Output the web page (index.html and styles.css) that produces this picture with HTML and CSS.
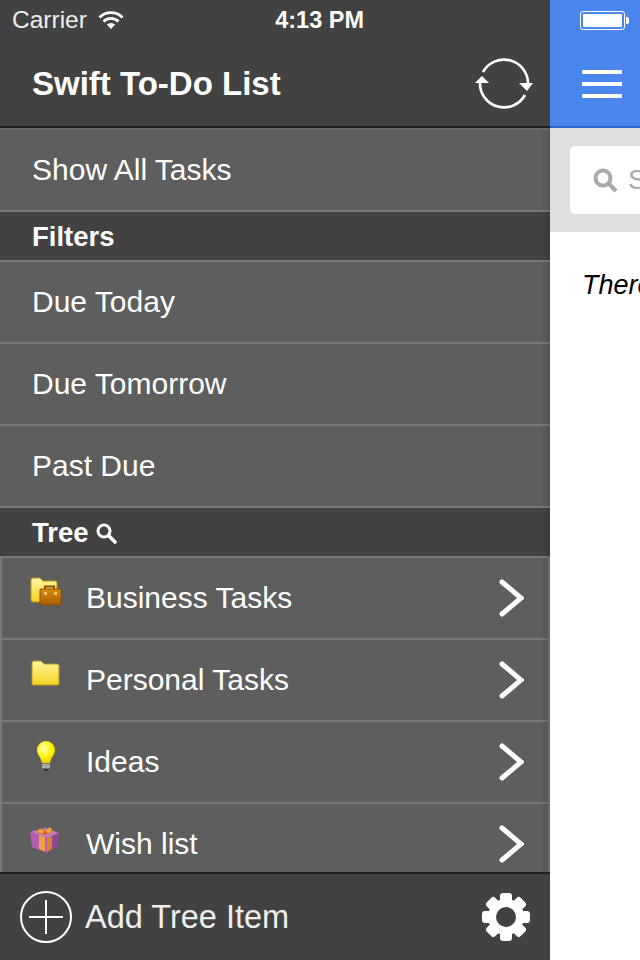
FILE: index.html
```html
<!DOCTYPE html>
<html lang="en">
<head>
  <meta charset="UTF-8" />
  <meta name="viewport" content="width=device-width, initial-scale=1" />
  <title>Swift To-Do List</title>
  <link rel="stylesheet" href="styles.css">
</head>
<body>

<div class="app">
  <aside class="sidebar">
    <header class="side-header">
      <div class="status-bar">
        <span class="carrier">Carrier
          <svg class="wifi" width="26" height="20" viewBox="0 0 26 20">
            <path d="M1.500 7.500a16 16 0 0 1 23 0" fill="none" stroke="#fff" stroke-width="2.800"/>
            <path d="M5.500 11.500a10.500 10.500 0 0 1 15 0" fill="none" stroke="#fff" stroke-width="2.800"/>
            <path d="M8.800 14.600a6 6 0 0 1 8.400 0L13 19z" fill="#fff"/>
          </svg>
        </span>
        <span class="time">4:13 PM</span>
      </div>
      <div class="title-bar">
        <h1>Swift To-Do List</h1>
        <svg class="sync" width="60" height="52" viewBox="0 0 60 52">
          <path d="M9 15A24 24 0 0 1 54 26" fill="none" stroke="#fff" stroke-width="2.600"/>
          <path d="M51 38A24 24 0 0 1 6 26" fill="none" stroke="#fff" stroke-width="2.600"/>
          <path d="M1 26L8 19L15 26z" fill="#fff"/>
          <path d="M45 26L59 26L53 34z" fill="#fff"/>
        </svg>
      </div>
    </header>

    <nav class="side-list">
      <a class="row">Show All Tasks</a>
      <h2 class="section">Filters</h2>
      <a class="row">Due Today</a>
      <a class="row">Due Tomorrow</a>
      <a class="row">Past Due</a>
      <h2 class="section">Tree
        <svg class="tree-search" width="22" height="22" viewBox="0 0 22 22">
          <circle cx="9" cy="9" r="6" fill="none" stroke="#fff" stroke-width="3"/>
          <path d="M13.500 13.500L20 20" stroke="#fff" stroke-width="3.600" stroke-linecap="round"/>
        </svg>
      </h2>

      <a class="row tree-row">
        <svg class="tree-icon" width="34" height="34" viewBox="0 0 34 34">
          <defs>
            <linearGradient id="folder" x1="0" y1="0" x2="0" y2="1">
              <stop offset="0" stop-color="#fff7a0"/>
              <stop offset="1" stop-color="#f5d21f"/>
            </linearGradient>
            <linearGradient id="brief" x1="0" y1="0" x2="0" y2="1">
              <stop offset="0" stop-color="#d98c0c"/>
              <stop offset="1" stop-color="#a85c04"/>
            </linearGradient>
          </defs>
          <path d="M1 4a2 2 0 0 1 2-2h7l3 3h12a2 2 0 0 1 2 2v19H3a2 2 0 0 1-2-2z" fill="url(#folder)" stroke="#b8951c"/>
          <path d="M15 13v-2.500h9V13" fill="none" stroke="#8a4c05" stroke-width="2"/>
          <rect x="10" y="13" width="21" height="16" rx="1" fill="url(#brief)" stroke="#8a4c05"/>
          <rect x="14" y="16" width="3" height="3" fill="#f4c860"/>
          <rect x="24" y="16" width="3" height="3" fill="#f4c860"/>
        </svg>
        <span>Business Tasks</span>
        <svg class="chevron" width="26" height="38" viewBox="0 0 26 38"><path d="M4 3L23 19L4 35" fill="none" stroke="#fff" stroke-width="5" stroke-linecap="round"/></svg>
      </a>
      <a class="row tree-row">
        <svg class="tree-icon" width="34" height="34" viewBox="0 0 34 34">
          <path d="M2 5a2 2 0 0 1 2-2h7l3 3h13a2 2 0 0 1 2 2v18a1 1 0 0 1-1 1H3a1 1 0 0 1-1-1z" fill="url(#folder)" stroke="#b8951c"/>
        </svg>
        <span>Personal Tasks</span>
        <svg class="chevron" width="26" height="38" viewBox="0 0 26 38"><path d="M4 3L23 19L4 35" fill="none" stroke="#fff" stroke-width="5" stroke-linecap="round"/></svg>
      </a>
      <a class="row tree-row">
        <svg class="tree-icon" width="34" height="34" viewBox="0 0 34 34">
          <defs>
            <radialGradient id="bulb" cx="0.4" cy="0.35" r="0.7">
              <stop offset="0" stop-color="#ffffb0"/>
              <stop offset="0.6" stop-color="#fff200"/>
              <stop offset="1" stop-color="#e3c900"/>
            </radialGradient>
          </defs>
          <path d="M16 1a9 9 0 0 0-9 9c0 5 4 7 5 13h8c1-6 5-8 5-13a9 9 0 0 0-9-9z" fill="url(#bulb)"/>
          <rect x="12" y="23" width="8" height="6" rx="1" fill="#777"/>
          <path d="M12 25h8M12 27h8" stroke="#ddd" stroke-width="1"/>
          <rect x="14" y="29" width="4" height="2" fill="#333"/>
        </svg>
        <span>Ideas</span>
        <svg class="chevron" width="26" height="38" viewBox="0 0 26 38"><path d="M4 3L23 19L4 35" fill="none" stroke="#fff" stroke-width="5" stroke-linecap="round"/></svg>
      </a>
      <a class="row tree-row">
        <svg class="tree-icon" width="34" height="34" viewBox="0 0 34 34">
          <path d="M0 10L15 6L29 11L17 16z" fill="#c77fc0"/>
          <path d="M0 10L17 16V31L2 25z" fill="#b45fb0"/>
          <path d="M17 16L29 11L28 24L17 31z" fill="#8c4a92"/>
          <path d="M9 13L15 15V29.500L9 27z" fill="#f0a040"/>
          <path d="M17 16l5-2v13l-5 3z" fill="#d9822b"/>
          <path d="M15 10c-5-6-9-2-6 1 2 1 4 1 6-1zM15 10c3-7 9-4 6 0-2 2-4 2-6 0z" fill="#f2a83c" stroke="#c97b1c"/>
          <circle cx="15" cy="11" r="2" fill="#d9622b"/>
        </svg>
        <span>Wish list</span>
        <svg class="chevron" width="26" height="38" viewBox="0 0 26 38"><path d="M4 3L23 19L4 35" fill="none" stroke="#fff" stroke-width="5" stroke-linecap="round"/></svg>
      </a>
    </nav>

    <footer class="side-footer">
      <svg class="add-icon" width="54" height="54" viewBox="0 0 54 54">
        <circle cx="27" cy="27" r="25" fill="none" stroke="#fff" stroke-width="2"/>
        <path d="M27 10V44M10 27H44" stroke="#fff" stroke-width="2"/>
      </svg>
      <span class="add-label">Add Tree Item</span>
      <svg class="gear" width="48" height="48" viewBox="0 0 48 48">
        <g fill="#fff">
          <circle cx="24" cy="24" r="18"/>
          <rect x="18" y="0" width="12" height="48" rx="3"/>
          <rect x="18" y="0" width="12" height="48" rx="3" transform="rotate(45 24 24)"/>
          <rect x="18" y="0" width="12" height="48" rx="3" transform="rotate(90 24 24)"/>
          <rect x="18" y="0" width="12" height="48" rx="3" transform="rotate(135 24 24)"/>
        </g>
        <circle cx="24" cy="24" r="10" fill="#424242"/>
      </svg>
    </footer>
  </aside>

  <main class="content">
    <div class="blue-bar">
      <div class="battery-line">
        <span class="battery"><span class="battery-fill"></span></span><span class="battery-tip"></span>
      </div>
      <div class="menu-line">
        <span class="burger"></span>
        <span class="burger"></span>
        <span class="burger"></span>
      </div>
    </div>
    <div class="search-area">
      <div class="search-box">
        <svg width="26" height="26" viewBox="0 0 26 26">
          <circle cx="11" cy="11" r="7.500" fill="none" stroke="#aaa" stroke-width="4"/>
          <path d="M17 17L24 24" stroke="#aaa" stroke-width="4.500"/>
        </svg>
        <span class="placeholder">Search</span>
      </div>
    </div>
    <p class="empty">There are no tasks</p>
  </main>
</div>

</body>
</html>
```

FILE: styles.css
```css
* { margin: 0; padding: 0; box-sizing: border-box; }

html, body {
  height: 960px;
  overflow: hidden;
}

body {
  font-family: "Liberation Sans", Arial, sans-serif;
  background: #fff;
  color: #fff;
}

.app {
  display: flex;
  width: 640px;
  height: 960px;
  overflow: hidden;
}

.sidebar {
  position: relative;
  flex: 0 0 550px;
  display: flex;
  flex-direction: column;
  height: 960px;
  background: #424242;
}

/* soft shadow along the right side of the menu */
.sidebar::after {
  content: "";
  position: absolute;
  top: 128px;
  right: 0;
  bottom: 88px;
  width: 8px;
  background: linear-gradient(to right, rgba(0, 0, 0, 0), rgba(0, 0, 0, 0.12));
}

.side-header {
  flex: 0 0 128px;
  border-bottom: 2px solid #1e1e1e;
}

.status-bar {
  display: flex;
  justify-content: space-between;
  align-items: center;
  height: 40px;
  padding: 0 186px 0 12px;
  font-size: 24px;
}

.carrier {
  display: flex;
  align-items: center;
  gap: 11px;
  font-size: 24.500px;
  color: #eee;
}

.time { font-weight: bold; font-size: 23.500px; }

.title-bar {
  display: flex;
  justify-content: space-between;
  align-items: center;
  height: 86px;
  padding: 0 16px 0 32px;
}

.title-bar h1 {
  font-size: 33px;
  font-weight: bold;
  padding-top: 2px;
}

.side-list {
  flex: 1;
  overflow: hidden;
  border-top: 2px solid #6a6a6a;
}

.row {
  display: flex;
  align-items: center;
  height: 82px;
  padding: 0 32px;
  background: #5e5e5e;
  border-bottom: 2px solid #797979;
  font-size: 30px;
}

.section {
  display: flex;
  align-items: center;
  gap: 6px;
  height: 50px;
  padding-left: 32px;
  padding-top: 1px;
  background: #424242;
  border-bottom: 2px solid #797979;
  font-size: 27.500px;
  font-weight: bold;
}

.tree-row {
  padding: 0 24px 0 28px;
  border-left: 2px solid #797979;
  border-right: 2px solid #797979;
}

.tree-row span { flex: 1; }

.tree-icon {
  flex: 0 0 34px;
  margin-right: 22px;
  align-self: flex-start;
  margin-top: 18px;
}

.side-footer {
  flex: 0 0 88px;
  display: flex;
  align-items: center;
  padding: 0 20px 0 19px;
  background: #424242;
  border-top: 2px solid #1e1e1e;
}

.add-label {
  flex: 1;
  margin-left: 12px;
  font-size: 32.500px;
  color: #eee;
}

.content {
  flex: 0 0 90px;
  width: 90px;
  overflow: hidden;
  color: #000;
}

.blue-bar {
  height: 128px;
  background: #4a86ee;
  border-bottom: 2px solid #2d66c8;
}

.battery-line {
  display: flex;
  align-items: center;
  height: 40px;
  padding-left: 30px;
}

.battery {
  display: block;
  width: 45px;
  height: 19px;
  padding: 2px;
  border: 1px solid #fff;
  border-radius: 3px;
}

.battery-fill {
  display: block;
  height: 100%;
  background: #fff;
  border-radius: 1px;
}

.battery-tip {
  display: block;
  width: 3px;
  height: 7px;
  margin-left: 1px;
  background: #fff;
  border-radius: 0 2px 2px 0;
}

.menu-line {
  display: flex;
  flex-direction: column;
  gap: 8px;
  padding: 30px 0 0 32px;
}

.burger {
  display: block;
  width: 40px;
  height: 4px;
  background: #fff;
}

.search-area {
  height: 104px;
  padding: 18px 0 18px 20px;
  background: #dedede;
}

.search-box {
  display: flex;
  align-items: center;
  gap: 10px;
  width: 300px;
  height: 68px;
  padding-left: 22px;
  background: #fff;
  border-radius: 5px;
}

.placeholder {
  font-size: 28px;
  color: #aaa;
}

.empty {
  padding: 38px 0 0 32px;
  width: 400px;
  font-size: 27px;
  font-style: italic;
  white-space: nowrap;
}
```
